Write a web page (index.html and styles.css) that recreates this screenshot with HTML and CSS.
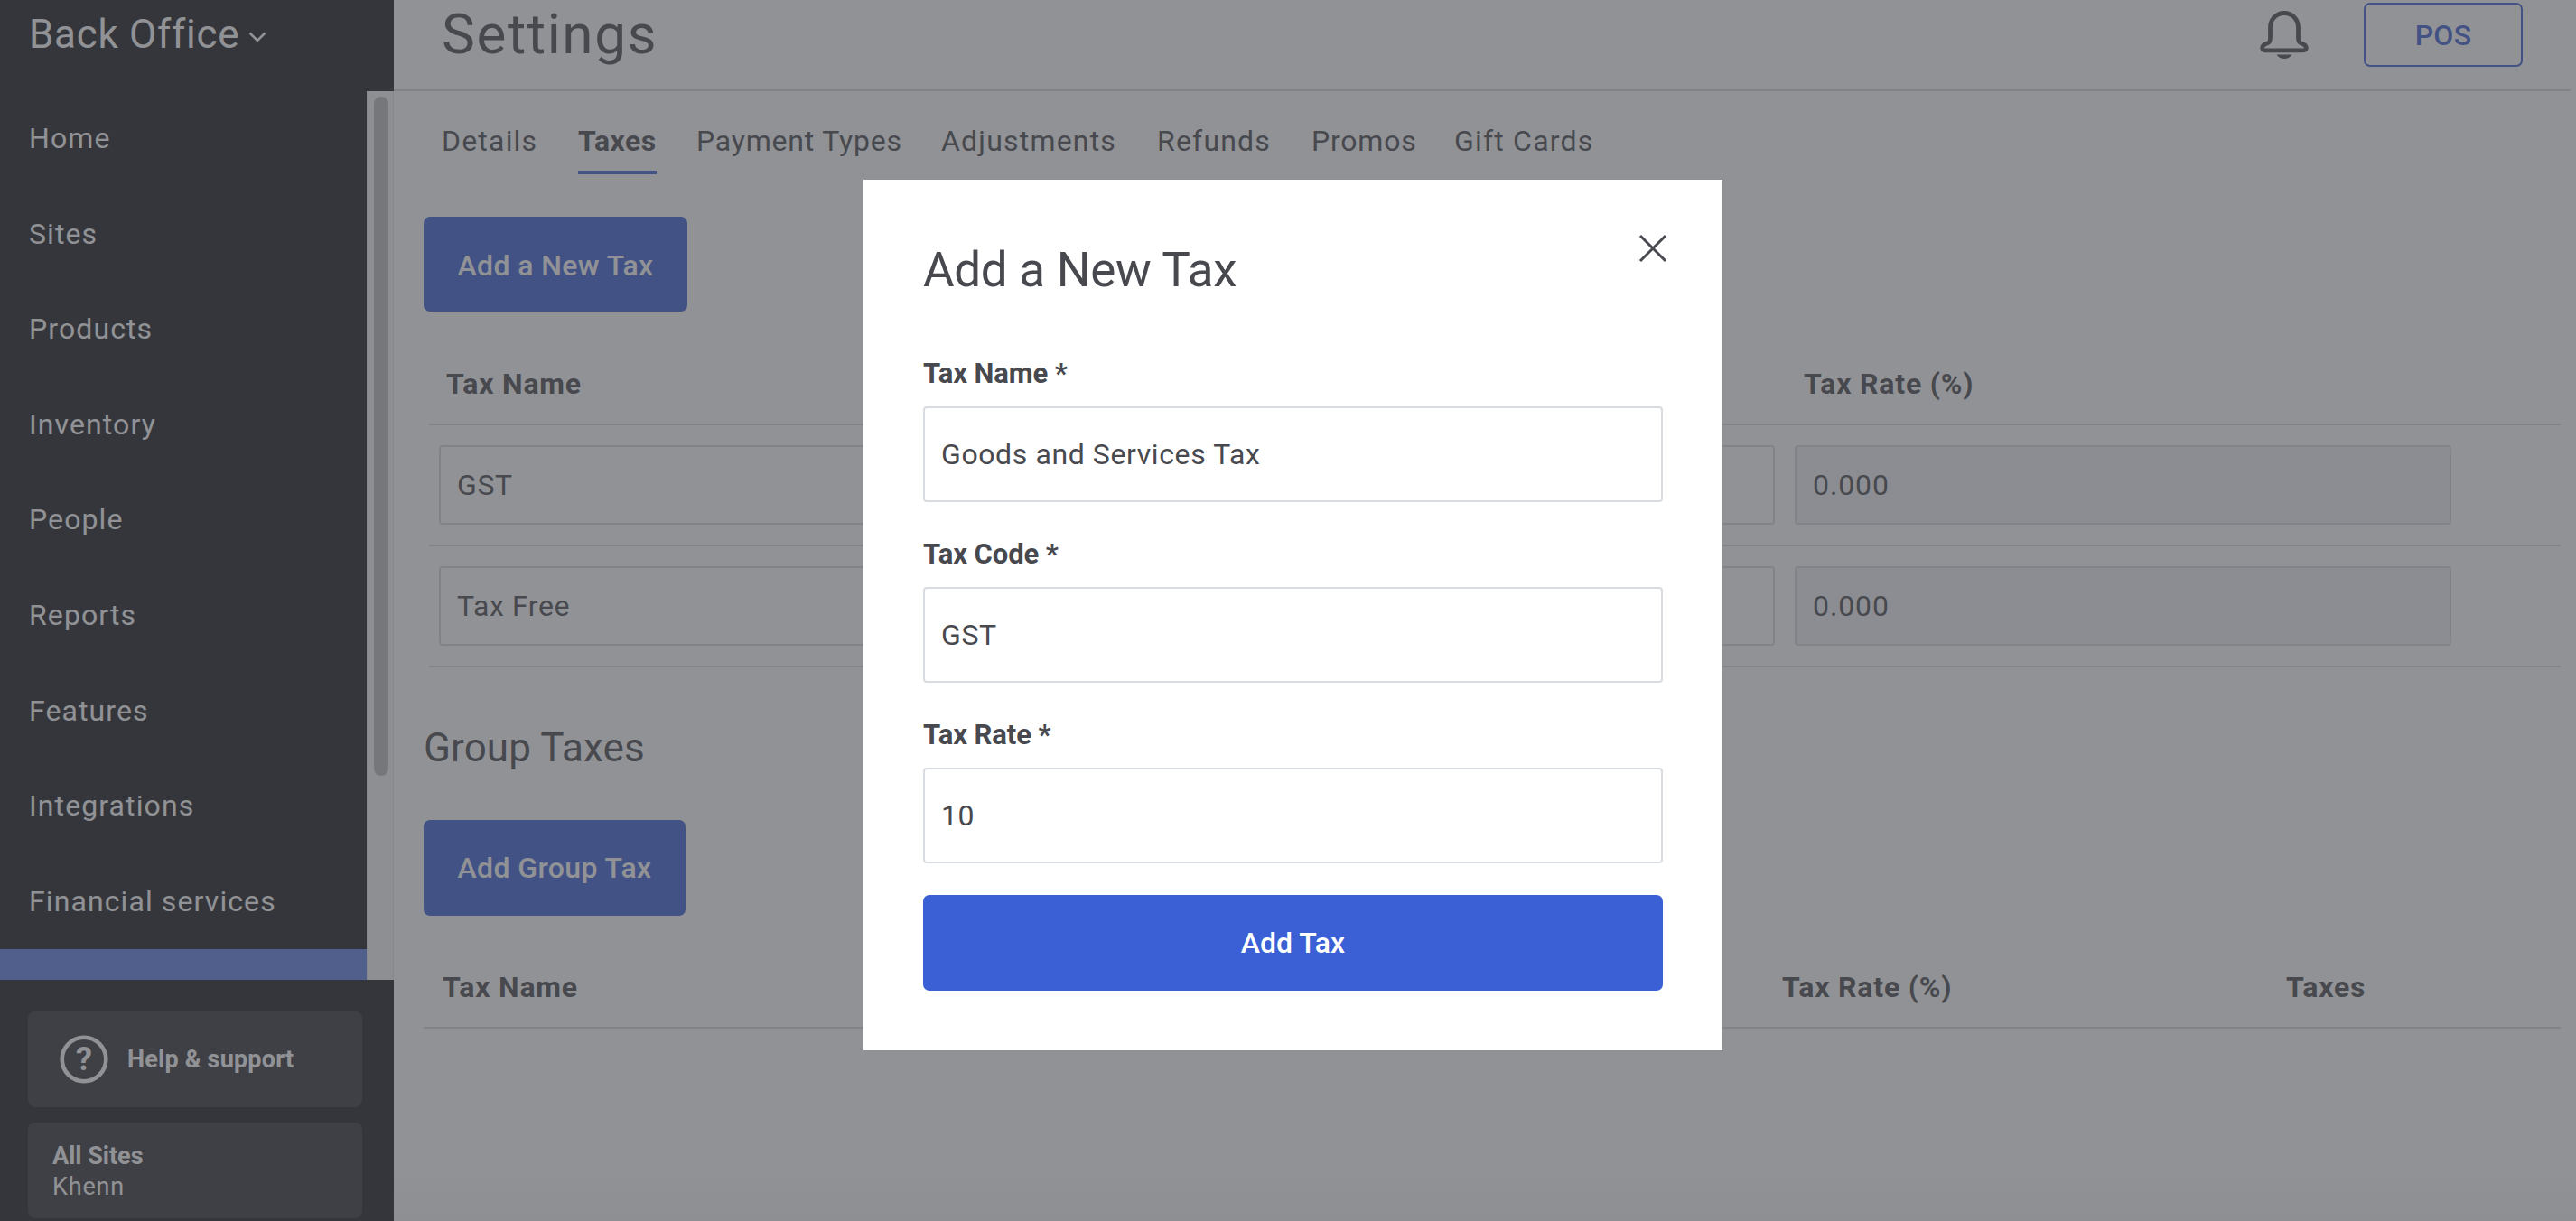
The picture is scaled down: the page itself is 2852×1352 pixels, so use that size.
FILE: index.html
```html
<!DOCTYPE html>
<html>
	<head>
		<meta charset="UTF-8">
		<title>Settings</title>
		<link rel="stylesheet" href="styles.css">
	</head>
	<body>
		<div class="page">
			<div class="sidebar">
				<div class="brand">
					<span>Back Office</span>
					<svg class="arrow" width="20" height="12" viewBox="0 0 20 12"><path d="M1.5 1.5L10 10L18.500 1.5"/></svg>
				</div>
				<div class="menu">
					<ul class="nav">
						<li>Home</li>
						<li>Sites</li>
						<li>Products</li>
						<li>Inventory</li>
						<li>People</li>
						<li>Reports</li>
						<li>Features</li>
						<li>Integrations</li>
						<li>Financial services</li>
						<li class="active"></li>
					</ul>
					<div class="scroll"><div class="thumb"></div></div>
				</div>
				<div class="foot">
					<div class="box help">
						<svg width="54" height="54" viewBox="0 0 54 54">
							<circle cx="27" cy="27" r="24.3"/>
							<text x="27" y="39" text-anchor="middle">?</text>
						</svg>
						<span>Help &amp; support</span>
					</div>
					<div class="box site">
						<b>All Sites</b>
						<span>Khenn</span>
					</div>
				</div>
			</div>
			<div class="main">
				<div class="header">
					<h1>Settings</h1>
					<svg class="bell" width="54" height="54" viewBox="0 0 54 54">
						<path class="line" d="M27 2.500C17.500 2.500 11.500 10 11.500 18.500V30C11.500 34 10.500 35.500 7 36.500C2 38 1 43.800 6 43.800H48C53 43.800 52 38 47 36.500C43.500 35.500 42.500 34 42.500 30V18.500C42.500 10 36.500 2.500 27 2.500Z"/>
						<path class="fill" d="M18.500 48.500H35.500C33.500 51.500 30.500 53 27 53C23.500 53 20.500 51.500 18.500 48.500Z"/>
					</svg>
					<button class="pos">POS</button>
				</div>
				<div class="tabs">
					<a>Details</a>
					<a class="on">Taxes</a>
					<a class="tight">Payment Types</a>
					<a>Adjustments</a>
					<a>Refunds</a>
					<a class="tight">Promos</a>
					<a>Gift Cards</a>
				</div>
				<div class="content">
					<button class="btn new">Add a New Tax</button>
					<div class="table">
						<div class="thead"><span>Tax Name</span><span>Tax Rate (%)</span></div>
						<div class="row">
							<input type="text" value="GST">
							<input type="text">
							<input type="text" value="0.000" class="rate" disabled>
						</div>
						<div class="row">
							<input type="text" value="Tax Free">
							<input type="text">
							<input type="text" value="0.000" class="rate" disabled>
						</div>
					</div>
					<h2>Group Taxes</h2>
					<button class="btn group">Add Group Tax</button>
					<div class="thead second"><span>Tax Name</span><span>Tax Rate (%)</span><span>Taxes</span></div>
				</div>
			</div>
		</div>
		<div class="overlay">
			<div class="modal">
				<svg class="close" width="32" height="32" viewBox="0 0 32 32"><path d="M2 2L30 30M30 2L2 30"/></svg>
				<h3>Add a New Tax</h3>
				<div class="field">
					<label>Tax Name *</label>
					<input type="text" value="Goods and Services Tax">
				</div>
				<div class="field">
					<label>Tax Code *</label>
					<input type="text" value="GST">
				</div>
				<div class="field">
					<label>Tax Rate *</label>
					<input type="text" value="10">
				</div>
				<button class="btn submit">Add Tax</button>
			</div>
		</div>
	</body>
</html>
```
FILE: styles.css
```css
*{
	box-sizing:border-box;
	margin:0;
	padding:0;
}
body{
	font-family:Roboto,"Liberation Sans",sans-serif;
	font-size:32px;
	line-height:38px;
	color:#47494f;
	overflow:hidden;
}
input,button{
	font-family:inherit;
	font-size:32px;
	color:#47494f;
}
svg{
	display:block;
	fill:none;
	flex:none;
}
.page{
	display:flex;
	height:1352px;
	background:#fff;
}

/* sidebar */
.sidebar{
	display:flex;
	flex-direction:column;
	flex:none;
	width:436px;
	background:#1a1a1e;
	color:#fff;
}
.brand{
	display:flex;
	align-items:center;
	height:101px;
	padding:0 0 25px 32px;
	font-size:44px;
	letter-spacing:0.7px;
}
.arrow{
	margin:5px 0 0 10px;
	stroke:#fff;
	stroke-width:2.6;
}
.menu{
	display:flex;
	height:984px;
	overflow:hidden;
}
.nav{
	flex:1;
	list-style:none;
	letter-spacing:1.1px;
}
.nav li{
	height:105.6px;
	padding-left:32px;
	line-height:105.6px;
}
.nav .active{
	background:#5d80e5;
}
.scroll{
	width:30px;
	padding:6px 5px 0 7px;
	background:#f7f7f9;
	border-left:1px solid #e8e8ea;
	border-right:1px solid #e8e8ea;
}
.thumb{
	width:16px;
	height:752px;
	border-radius:8px;
	background:#bcbcbf;
}
.foot{
	display:flex;
	flex-direction:column;
	gap:17px;
	padding:35px 35px 0 31px;
	font-size:27px;
}
.box{
	height:106px;
	border-radius:8px;
	background:#333337;
}
.help{
	display:flex;
	align-items:center;
	gap:21px;
	padding-left:35px;
	font-weight:700;
	letter-spacing:0.2px;
}
.help circle{
	stroke:#fff;
	stroke-width:4.6;
}
.help text{
	fill:#fff;
	font-size:36px;
	font-weight:700;
}
.site{
	display:flex;
	flex-direction:column;
	padding:20px 0 0 27px;
	line-height:34px;
}
.site span{
	letter-spacing:0.8px;
}

/* main */
.main{
	flex:1;
	background:linear-gradient(#fff 1290px,#f7f7f8 1352px);
}
.header{
	display:flex;
	align-items:center;
	height:101px;
	margin-right:6px;
	padding:0 53px 22px;
	border-bottom:2px solid #dadade;
}
h1{
	flex:1;
	font-size:62px;
	font-weight:400;
	line-height:75px;
	padding-bottom:2px;
	letter-spacing:1.6px;
}
.bell{
	margin-right:61px;
}
.bell .line{
	stroke:#47494f;
	stroke-width:4.8;
}
.bell .fill{
	fill:#47494f;
}
.pos{
	width:176px;
	height:71px;
	border:2px solid #3b60d6;
	border-radius:7px;
	background:none;
	color:#3b60d6;
	font-weight:500;
	letter-spacing:0.3px;
}
.tabs{
	display:grid;
	grid-template-columns:151px 131px 271px 239px 171px 158px 200px;
	justify-items:start;
	height:92px;
	padding-left:53px;
	letter-spacing:1.2px;
}
.tabs a{
	padding:36px 0 14px;
	white-space:nowrap;
}
.tabs .tight{
	letter-spacing:0.8px;
}
.tabs .on{
	border-bottom:4px solid #3b60d6;
	font-weight:700;
	letter-spacing:0.5px;
}
.content{
	padding:47px 17px 0 33px;
}
.btn{
	display:block;
	height:106px;
	border:0;
	border-radius:7px;
	background:#3b60d6;
	color:#fff;
	font-weight:500;
	letter-spacing:0.4px;
}
.new{
	width:292px;
	height:105px;
	padding-top:2px;
}
.group{
	width:290px;
}
.table{
	margin:35px 0 0 6px;
}
.thead{
	display:grid;
	grid-template-columns:1503px 558px 1fr;
	height:91px;
	padding-left:19px;
	border-bottom:2px solid #dadade;
	font-weight:700;
	line-height:90px;
	letter-spacing:0.8px;
}
.second{
	grid-template-columns:1483px 558px 1fr;
	margin-top:34px;
	padding-left:21px;
}
.row{
	display:grid;
	grid-template-columns:730px 727px 727px;
	gap:22px;
	height:134px;
	padding:22px 11px;
	border-bottom:2px solid #dadade;
}
input{
	width:100%;
	height:88px;
	padding:0 18px;
	border:2px solid #dadade;
	border-radius:4px;
	background:#fff;
	letter-spacing:0.6px;
}
.rate{
	background:#f3f3f7;
	letter-spacing:0.9px;
}
h2{
	margin:63px 0 54px;
	font-size:44px;
	font-weight:400;
	line-height:52px;
	letter-spacing:0.1px;
}

/* dialog */
.overlay{
	position:fixed;
	top:0;
	left:0;
	display:flex;
	justify-content:center;
	align-items:flex-start;
	width:100%;
	height:100%;
	padding:199px 0 0 11px;
	background:rgba(71,73,79,0.6);
}
.modal{
	position:relative;
	width:951px;
	height:964px;
	padding:68px 66px 66px;
	background:#fff;
}
.close{
	position:absolute;
	top:60px;
	right:61px;
	stroke:#47494f;
	stroke-width:3;
}
h3{
	margin-bottom:65px;
	font-size:53px;
	font-weight:400;
	line-height:64px;
	letter-spacing:-0.3px;
}
.field{
	margin-bottom:40px;
}
.field label{
	display:block;
	margin-bottom:18px;
	font-size:31px;
	font-weight:700;
	line-height:36px;
	letter-spacing:-0.1px;
}
.field input{
	display:block;
	height:106px;
	border-color:#d8dbdf;
}
.submit{
	width:100%;
	margin-top:-5px;
	letter-spacing:0;
}
```
